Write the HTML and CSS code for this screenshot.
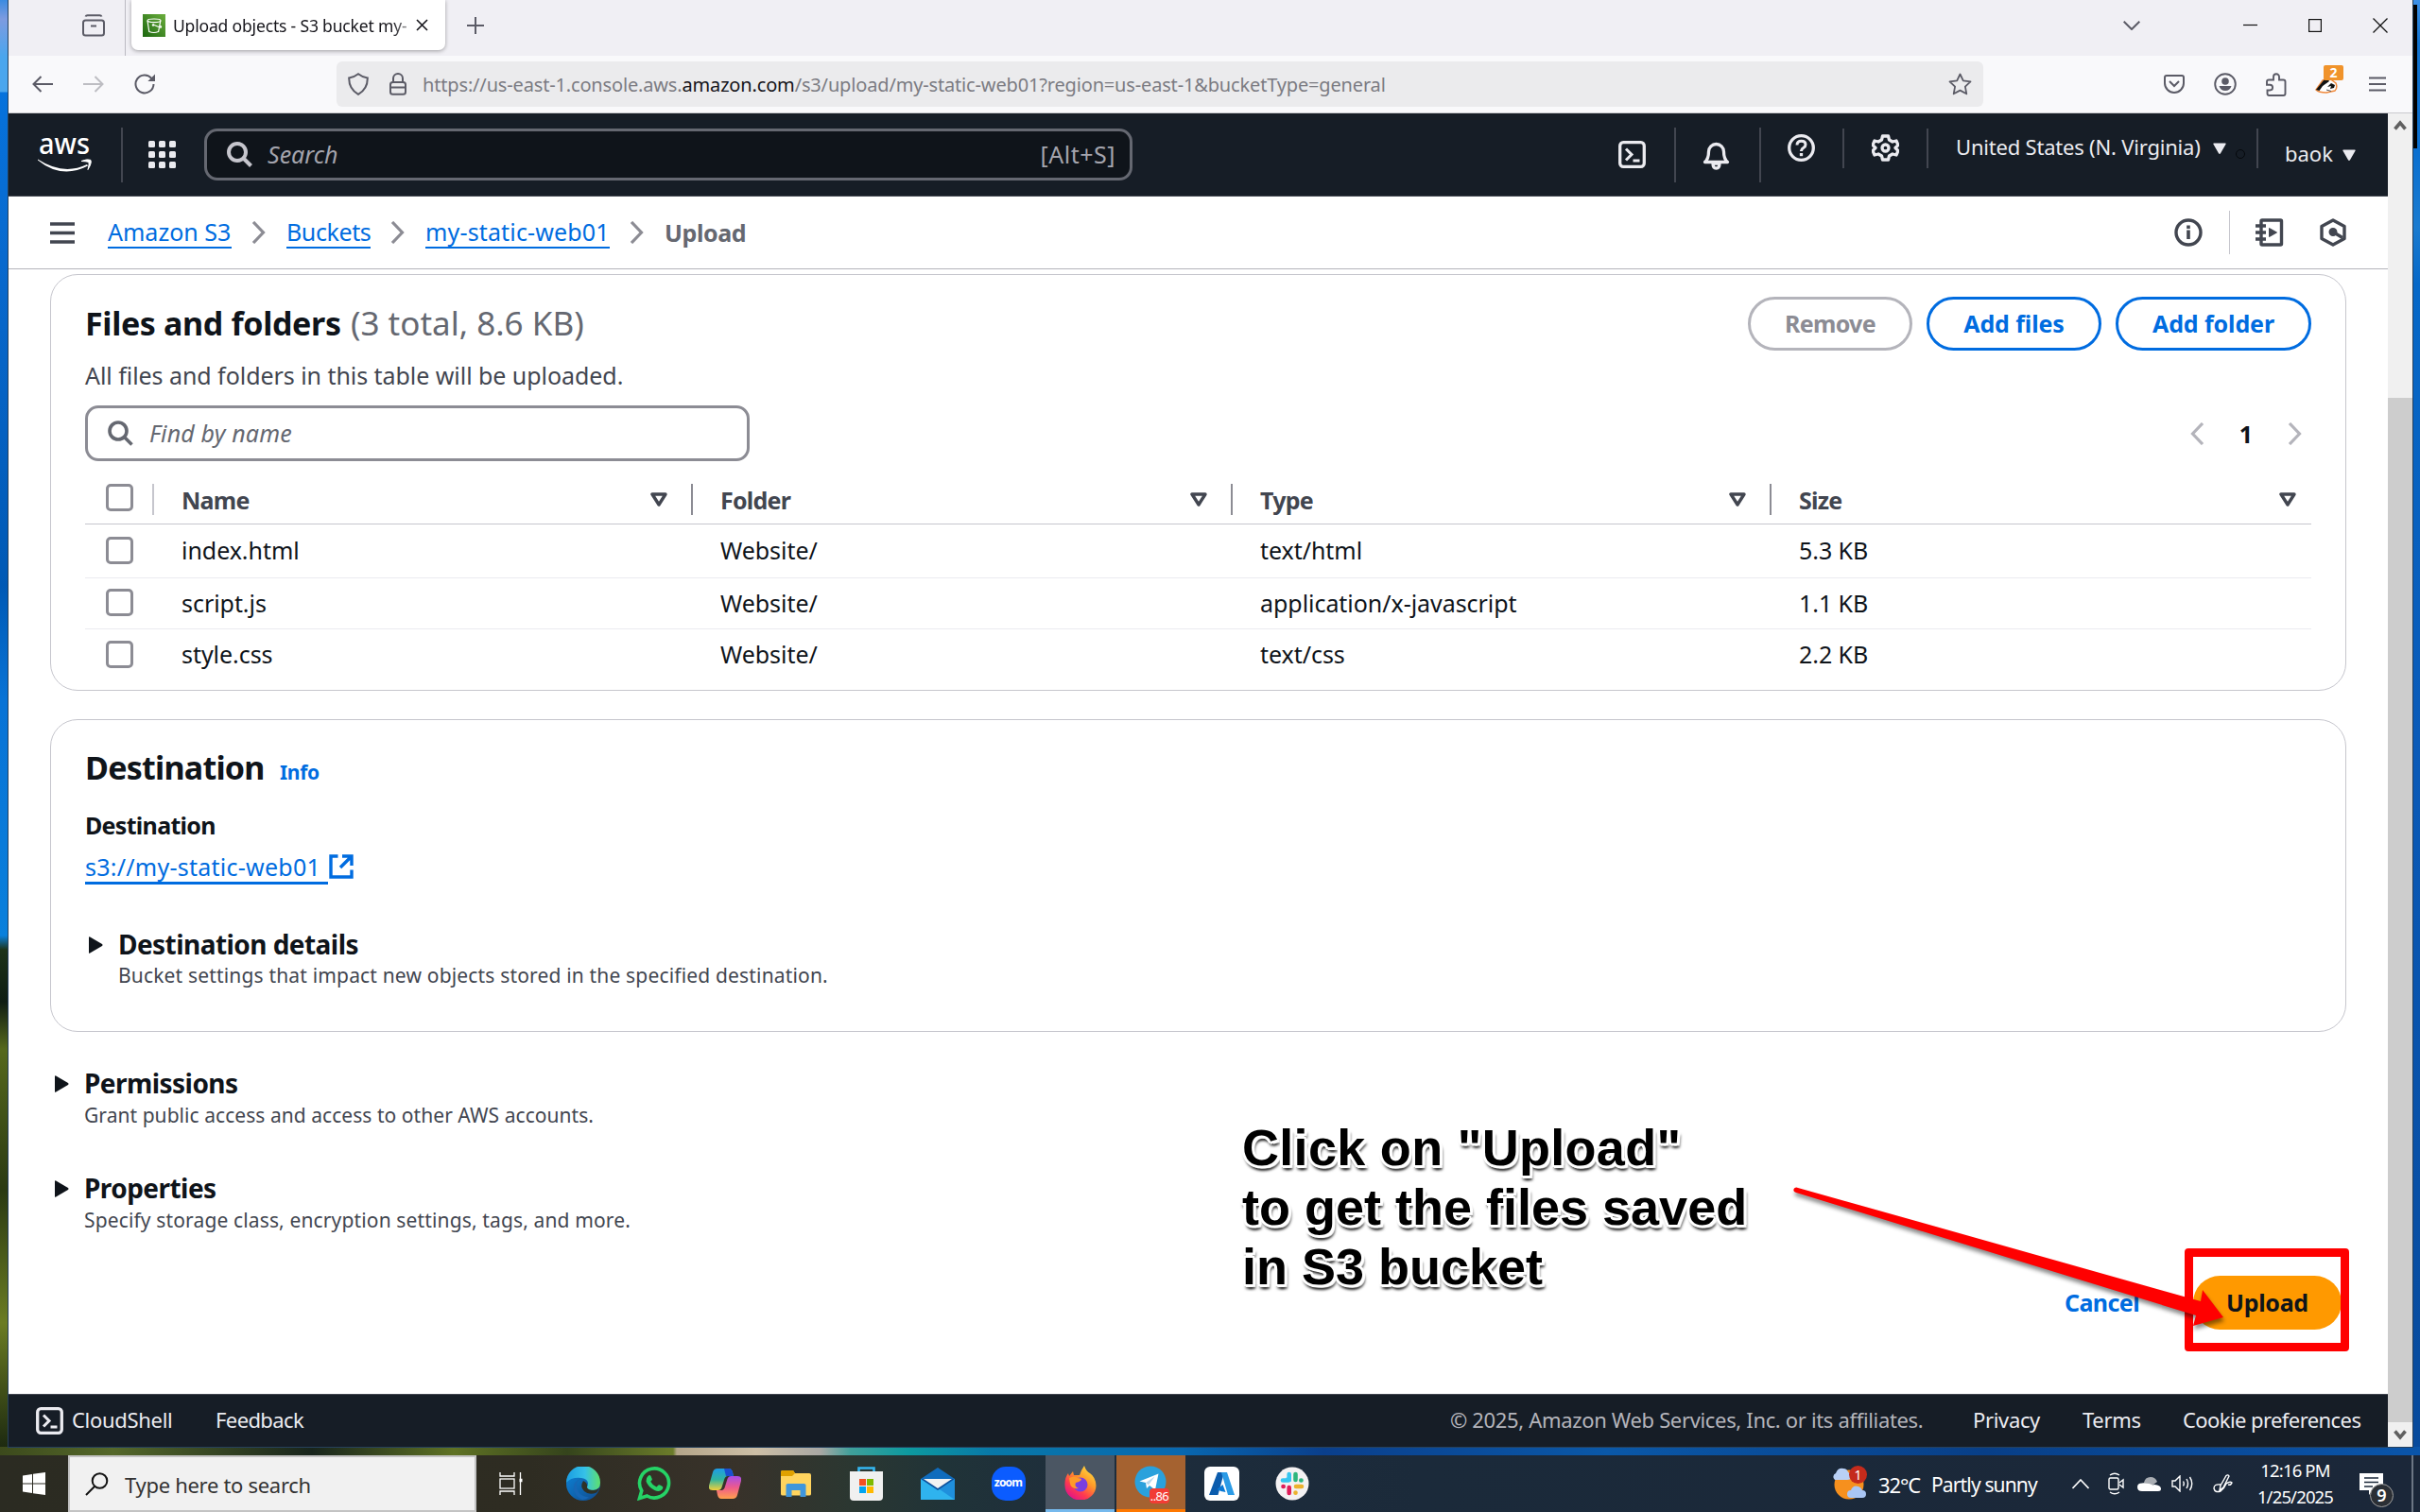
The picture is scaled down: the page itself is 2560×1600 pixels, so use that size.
FILE: index.html
```html
<!DOCTYPE html>
<html lang="en">
<head>
<meta charset="utf-8">
<title>Upload objects - S3 bucket my-static-web01</title>
<link rel="stylesheet" href="styles.css">
</head>
<body>
<div class="desktop">
<div class="window">
  <div class="tabstrip">
    <svg class="recent" width="24" height="24" viewBox="0 0 24 24" fill="none" stroke="#5b5b66" stroke-width="2"><path d="M3.5 2.5Q4 1.2 5.500 1.200H18.500Q20 1.200 20.500 2.500"/><rect x="1" y="6.500" width="22" height="16" rx="2.500"/><path d="M9 12.500h6"/></svg>
    <span class="tab-sep"></span>
    <div class="tab">
      <svg class="favicon" width="24" height="24" viewBox="0 0 24 24"><defs><linearGradient id="fg" x1="0" y1="1" x2="1" y2="0"><stop offset="0" stop-color="#1b660f"/><stop offset="1" stop-color="#6cae3e"/></linearGradient></defs><path fill="url(#fg)" d="M0 0h24v24H0z"/><g fill="none" stroke="#fff" stroke-width="1.200"><ellipse cx="12" cy="6.800" rx="7" ry="1.800"/><path d="M5 7l1.800 11.500q5 2 9.800 0L18.800 7M11 11l7 3q2 .5 1.500-1l-2-1"/></g><circle cx="11" cy="11.500" r="1.200" fill="#fff"/></svg>
      <span class="tab-title">Upload objects - S3 bucket my-</span>
      <svg class="tab-close" width="13" height="13" viewBox="0 0 13 13" stroke="#15141a" stroke-width="1.600"><path d="M1 1l11 11M12 1L1 12"/></svg>
    </div>
    <svg class="newtab" width="18" height="18" viewBox="0 0 18 18" stroke="#5b5b66" stroke-width="2"><path d="M9 0v18M0 9h18"/></svg>
    <svg class="tabs-all" width="18" height="10" viewBox="0 0 18 10" fill="none" stroke="#5b5b66" stroke-width="2"><path d="M.7.7L9 9 17.300.7"/></svg>
    <svg class="w-min" width="15" height="16" viewBox="0 0 15 16"><path d="M0 7.500h15" stroke="#111" stroke-width="1.200"/></svg>
    <svg class="w-max" width="14" height="14" viewBox="0 0 14 14"><rect x=".6" y=".6" width="12.800" height="12.800" fill="none" stroke="#111" stroke-width="1.200"/></svg>
    <svg class="w-close" width="16" height="16" viewBox="0 0 16 16"><path d="M.5.5l15 15M15.500.5l-15 15" stroke="#111" stroke-width="1.300"/></svg>
  </div>

  <div class="toolbar">
    <svg class="t-back" width="22" height="18" viewBox="0 0 22 18" fill="none" stroke="#5b5b66" stroke-width="2"><path d="M9.500 1L1.500 9l8 8M1.500 9H22"/></svg>
    <svg class="t-fwd" width="22" height="18" viewBox="0 0 22 18" fill="none" stroke="#bdbdc2" stroke-width="2"><path d="M12.500 1l8 8-8 8M20.500 9H0"/></svg>
    <svg class="t-reload" width="23" height="22" viewBox="0 0 23 22"><path d="M18.300 4.800A9.500 9.500 0 1 0 20.500 11" fill="none" stroke="#5b5b66" stroke-width="2"/><path d="M22 .6V8h-7.600z" fill="#5b5b66"/></svg>
    <div class="urlbar">
      <svg class="u-shield" width="22" height="24" viewBox="0 0 22 24" fill="none" stroke="#5b5b66" stroke-width="2"><path d="M11 1.200q5 3.800 9.800 4.300Q21 17 11 22.800 1 17 1.200 5.500 6 5 11 1.200z"/></svg>
      <svg class="u-lock" width="18" height="24" viewBox="0 0 18 24" fill="none" stroke="#5b5b66" stroke-width="2"><rect x="1" y="10" width="16" height="12.700" rx="2.500"/><path d="M4 10V6a5 5 0 0 1 10 0v4M1 15.500h16"/></svg>
      <span class="url">https://us-east-1.console.aws.<b>amazon.com</b>/s3/upload/my-static-web01?region=us-east-1&amp;bucketType=general</span>
      <svg class="u-star" width="25" height="24" viewBox="0 0 25 24" fill="none" stroke="#5b5b66" stroke-width="1.800" stroke-linejoin="round"><path d="M12.500 1.500l3.300 6.900 7.700 1-5.600 5.300 1.400 7.600-6.800-3.700-6.800 3.700 1.400-7.600L1.500 9.400l7.700-1z"/></svg>
    </div>
    <svg class="t-pocket" width="22" height="20" viewBox="0 0 22 20" fill="none" stroke="#5b5b66" stroke-width="2"><path d="M3 1h16q2 0 2 2v6a10 10 0 0 1-20 0V3q0-2 2-2z"/><path d="M6 7l5 5 5-5"/></svg>
    <svg class="t-acct" width="24" height="24" viewBox="0 0 24 24"><circle cx="12" cy="12" r="10.800" fill="none" stroke="#5b5b66" stroke-width="1.900"/><circle cx="12" cy="9" r="3.800" fill="#5b5b66"/><path d="M5.500 14h13q-1.500 5-6.500 5t-6.500-5z" fill="#5b5b66"/></svg>
    <svg class="t-ext" width="22" height="25" viewBox="0 0 22 25" fill="none" stroke="#5b5b66" stroke-width="1.900"><path d="M3 7.500h5V4.200a3 3 0 0 1 6 0v3.300h4.500q2 0 2 2V22q0 2-2 2H3.500q-2 0-2-2v-3.500h2.700a2.900 2.900 0 0 0 0-5.800H1V9.500q0-2 2-2z"/></svg>
    <div class="t-badger">
      <svg width="24" height="19" viewBox="0 0 24 19"><path d="M1 15L8 5q6-3 10 0l4 3q2 5-1 8l-9 2q-8 0-11-3z" fill="#fff" stroke="#f08a3c" stroke-width="1.500"/><path d="M1 15L9 5l4-2 2 3-7 5-3.500 5zM13 12l4-4 4 2-1 3-4 1 1-3z" fill="#111"/><path d="M12 15l5 1.500" stroke="#555"/></svg>
      <span class="badge">2</span>
    </div>
    <svg class="t-menu" width="18" height="16" viewBox="0 0 18 16" stroke="#5b5b66" stroke-width="2"><path d="M0 1.500h18M0 8h18M0 14.500h18"/></svg>
  </div>

  <div class="view">
    <div class="page">
      <header class="nav">
        <svg class="aws" width="58" height="64" viewBox="0 -14 58 64"><text x="1" y="17" class="aws-word" textLength="54" lengthAdjust="spacingAndGlyphs">aws</text><path d="M0 22.500q27 17.500 52 5.500l1 1.600Q25 44 0 23.500z" fill="#fff"/><path d="M46 24.500q6-2.500 9.800-1.200Q57.500 26 53 33.500q1.500-6 1-8-2-.8-8-1z" fill="#fff" stroke="#fff"/></svg>
        <i class="vsep tall a"></i>
        <svg class="apps" width="29" height="29" viewBox="0 0 29 29" fill="#ebebf0"><rect width="7" height="7" rx="1.500"/><rect x="11" width="7" height="7" rx="1.500"/><rect x="22" width="7" height="7" rx="1.500"/><rect y="11" width="7" height="7" rx="1.500"/><rect x="11" y="11" width="7" height="7" rx="1.500"/><rect x="22" y="11" width="7" height="7" rx="1.500"/><rect y="22" width="7" height="7" rx="1.500"/><rect x="11" y="22" width="7" height="7" rx="1.500"/><rect x="22" y="22" width="7" height="7" rx="1.500"/></svg>
        <div class="search"><svg width="27" height="27" viewBox="0 0 27 27" fill="none" stroke="#c6c6cd" stroke-width="4"><circle cx="11" cy="11" r="9"/><path d="M17.500 17.500l8 8"/></svg><em>Search</em><span>[Alt+S]</span></div>
        <svg class="n-shell" width="29" height="29" viewBox="0 0 29 29" fill="none" stroke="#ebebf0" stroke-width="3.300"><rect x="1.700" y="1.700" width="25.600" height="25.600" rx="3.500"/><path d="M8 8.500l6 6-6 6M15.500 21h7" stroke-width="3"/></svg>
        <i class="vsep tall b"></i>
        <svg class="n-bell" width="29" height="32" viewBox="0 0 29 32" fill="none" stroke="#ebebf0" stroke-width="3.300" stroke-linejoin="round"><path d="M2.500 23.500q4-3.500 4-11a8 8 0 0 1 16 0q0 7.500 4 11z"/><path d="M11 25q0 5 3.500 5t3.500-5z"/></svg>
        <i class="vsep tall c"></i>
        <div class="nav-high">
          <svg class="n-help" width="29" height="29" viewBox="0 0 29 29" fill="none" stroke="#ebebf0" stroke-width="3.300"><circle cx="14.500" cy="14.500" r="12.800"/><path d="M10 11.500q0-4.300 4.500-4.300T19 11q0 2-2 3.200t-2.500 3.300V18" stroke-width="3"/><path d="M14.500 20v3.200"/></svg>
          <i class="vsep d"></i>
          <svg class="n-gear" width="29" height="29" viewBox="0 0 29 29" fill="none" stroke="#ebebf0" stroke-width="3.300" stroke-linejoin="round"><path d="M11.500 2h6l1 4 3.500 2 4-1 2 4.500-3 3 3 3-2 4.500-4-1-3.500 2-1 4h-6l-1-4L7 21l-4 1-2-4.500 3-3-3-3L3 7l4 1 3.500-2z"/><circle cx="14.500" cy="14.500" r="3.500"/></svg>
          <i class="vsep e"></i>
          <span class="region">United States (N. Virginia)</span>
          <svg class="tri-r" width="14" height="12" viewBox="0 0 14 12"><path d="M1 .5h12q1 .3.600 1L8 11.300q-1 1.200-2 0L.4 1.500Q0 .8 1 .5z" fill="#ebebf0"/></svg>
          <i class="ring"></i>
          <i class="vsep f"></i>
        </div>
        <span class="user">baok</span>
        <svg class="tri-u" width="14" height="12" viewBox="0 0 14 12"><path d="M1 .5h12q1 .3.600 1L8 11.300q-1 1.200-2 0L.4 1.500Q0 .8 1 .5z" fill="#ebebf0"/></svg>
      </header>

      <nav class="crumbs">
        <svg class="burger" width="26" height="23" viewBox="0 0 26 23" stroke="#424650" stroke-width="3.600"><path d="M0 2h26M0 11.500h26M0 21h26"/></svg>
        <a class="c1">Amazon S3</a>
        <svg class="chev" width="15" height="24" viewBox="0 0 15 24"><path d="M2 1l10.500 11L2 23" fill="none" stroke="#8c8c94" stroke-width="3.200"/></svg>
        <a class="c2">Buckets</a>
        <svg class="chev" width="15" height="24" viewBox="0 0 15 24"><path d="M2 1l10.500 11L2 23" fill="none" stroke="#8c8c94" stroke-width="3.200"/></svg>
        <a class="c3">my-static-web01</a>
        <svg class="chev" width="15" height="24" viewBox="0 0 15 24"><path d="M2 1l10.500 11L2 23" fill="none" stroke="#8c8c94" stroke-width="3.200"/></svg>
        <b>Upload</b>
        <svg class="k-info" width="30" height="30" viewBox="0 0 30 30" fill="none" stroke="#424650" stroke-width="3.400"><circle cx="15" cy="15" r="13"/><path d="M15 12.500V22M15 7.500V11" stroke-width="3.600"/></svg>
        <i class="k-sep"></i>
        <svg class="k-tut" width="30" height="30" viewBox="0 0 30 30" fill="none" stroke="#424650" stroke-width="3.400"><rect x="6" y="2" width="21.500" height="26" rx="1"/><path d="M0 8h11M0 15h11M0 22h11"/><path d="M14.500 10.500v9l8-4.500z" fill="#424650" stroke-width="1"/></svg>
        <svg class="k-hex" width="28" height="30" viewBox="0 0 28 30" fill="none" stroke="#424650" stroke-width="3.400" stroke-linejoin="round"><path d="M14 2l12 6.500v13L14 28 2 21.500v-13z"/><circle cx="14" cy="14.500" r="2.800" fill="#424650"/><path d="M14 14.500l10 6"/></svg>
      </nav>

      <main>
        <section class="card files">
          <div class="card-head">
            <h2>Files and folders</h2><span class="count">(3 total, 8.6 KB)</span>
            <button class="btn off">Remove</button><button class="btn w2">Add files</button><button class="btn w3">Add folder</button>
          </div>
          <p class="lead">All files and folders in this table will be uploaded.</p>
          <div class="filter-row">
            <div class="filter"><svg width="27" height="27" viewBox="0 0 27 27" fill="none" stroke="#656871" stroke-width="3.600"><circle cx="11" cy="11" r="9"/><path d="M17.500 17.500l8 8"/></svg><em>Find by name</em></div>
            <div class="pager"><svg width="15" height="24" viewBox="0 0 15 24"><path d="M13 1L2.500 12 13 23" fill="none" stroke="#b4b4bb" stroke-width="3.200"/></svg><b>1</b><svg width="15" height="24" viewBox="0 0 15 24"><path d="M2 1l10.500 11L2 23" fill="none" stroke="#b4b4bb" stroke-width="3.200"/></svg></div>
          </div>
          <div class="row head">
            <i class="box"></i>
            <span class="th first">Name<svg width="18" height="15" viewBox="0 0 18 15"><path d="M2 2h14L9 13z" fill="none" stroke="#424650" stroke-width="3.400" stroke-linejoin="round"/></svg></span>
            <span class="th">Folder<svg width="18" height="15" viewBox="0 0 18 15"><path d="M2 2h14L9 13z" fill="none" stroke="#424650" stroke-width="3.400" stroke-linejoin="round"/></svg></span>
            <span class="th">Type<svg width="18" height="15" viewBox="0 0 18 15"><path d="M2 2h14L9 13z" fill="none" stroke="#424650" stroke-width="3.400" stroke-linejoin="round"/></svg></span>
            <span class="th last">Size<svg width="18" height="15" viewBox="0 0 18 15"><path d="M2 2h14L9 13z" fill="none" stroke="#424650" stroke-width="3.400" stroke-linejoin="round"/></svg></span>
          </div>
          <div class="row r1"><i class="box"></i><span>index.html</span><span>Website/</span><span>text/html</span><span>5.3 KB</span></div>
          <div class="row"><i class="box"></i><span>script.js</span><span>Website/</span><span>application/x-javascript</span><span>1.1 KB</span></div>
          <div class="row end"><i class="box"></i><span>style.css</span><span>Website/</span><span>text/css</span><span>2.2 KB</span></div>
        </section>

        <section class="card dest">
          <div class="dest-head"><h2>Destination</h2><a>Info</a></div>
          <h4>Destination</h4>
          <div class="dest-link"><a>s3://my-static-web01</a><svg width="26" height="26" viewBox="0 0 26 26" fill="none" stroke="#006ce0" stroke-width="3.400"><path d="M9.500 2H2v22h22v-7.500M14 2h10v10M24 2L12 14"/></svg></div>
          <div class="expander inner"><svg width="16" height="18" viewBox="0 0 16 18"><path d="M1 .8Q1-.3 2.200.4L15 8q1 1 0 2L2.200 17.600Q1 18.300 1 17.200z" fill="#0f141a"/></svg><div><h3>Destination details</h3><p>Bucket settings that impact new objects stored in the specified destination.</p></div></div>
        </section>

        <div class="expander perms"><svg width="16" height="18" viewBox="0 0 16 18"><path d="M1 .8Q1-.3 2.200.4L15 8q1 1 0 2L2.200 17.600Q1 18.300 1 17.200z" fill="#0f141a"/></svg><div><h3>Permissions</h3><p class="p2">Grant public access and access to other AWS accounts.</p></div></div>
        <div class="expander props"><svg width="16" height="18" viewBox="0 0 16 18"><path d="M1 .8Q1-.3 2.200.4L15 8q1 1 0 2L2.200 17.600Q1 18.300 1 17.200z" fill="#0f141a"/></svg><div><h3>Properties</h3><p class="p2 p3">Specify storage class, encryption settings, tags, and more.</p></div></div>
        <div class="actions"><a>Cancel</a><button class="primary">Upload</button></div>
      </main>

      <footer>
        <svg width="29" height="29" viewBox="0 0 29 29" fill="none" stroke="#ebebf0" stroke-width="3.300"><rect x="1.700" y="1.700" width="25.600" height="25.600" rx="3.500"/><path d="M8 8.500l6 6-6 6M15.500 21h7" stroke-width="3"/></svg>
        <span class="f-shell">CloudShell</span><span class="f-feed">Feedback</span>
        <span class="f-copy">© 2025, Amazon Web Services, Inc. or its affiliates.</span><span class="f-priv">Privacy</span><span class="f-terms">Terms</span><span class="f-cook">Cookie preferences</span>
      </footer>
    </div>
    <div class="scroll">
      <svg width="26" height="26" viewBox="0 0 26 26"><path d="M7.500 16.500L13 10l5.500 6.500" fill="none" stroke="#606060" stroke-width="3.600"/></svg>
      <i class="thumb"></i>
      <svg width="26" height="26" viewBox="0 0 26 26"><path d="M7.500 9.500L13 16l5.500-6.500" fill="none" stroke="#606060" stroke-width="3.600"/></svg>
    </div>
  </div>
</div>
</div>

<div class="taskbar">
  <svg class="start" width="24" height="24" viewBox="0 0 24 24" fill="#fff"><path d="M0 3.400L10 2v9.500H0zM11 1.800L24 0v11.500H11zM0 12.500h10V22L0 20.600zM11 12.500h13V24l-13-1.800z"/></svg>
  <div class="tsearch"><svg width="25" height="25" viewBox="0 0 25 25" fill="none" stroke="#111" stroke-width="2"><circle cx="15.500" cy="9" r="7.800"/><path d="M10 15L1 24"/></svg><span>Type here to search</span></div>
  <svg class="tview" width="25" height="24" viewBox="0 0 25 24" fill="none" stroke="#fff" stroke-width="1.300"><path d="M1 0v4h15V0M1 24v-4h15v4"/><rect x="1" y="7" width="15" height="10"/><path d="M22.500 0v24"/><path d="M21.500 8.500h3" stroke-width="3.500"/></svg>
  <svg class="edge" width="36" height="36" viewBox="0 0 36 36"><defs><linearGradient id="e1" x1="0" x2="1"><stop offset="0" stop-color="#1b9de2"/><stop offset=".55" stop-color="#35c1e8"/><stop offset="1" stop-color="#5fe06a"/></linearGradient><linearGradient id="e2" x1="0" y1="0" x2="1" y2="1"><stop offset="0" stop-color="#0c86dc"/><stop offset="1" stop-color="#114a8b"/></linearGradient></defs><circle cx="18" cy="18" r="18" fill="url(#e2)"/><path d="M0 17A18 18 0 0 1 36 17q0 8-9 8-6 0-6-3 2-1 2-4 0-5-7-6Q5 11 0 17z" fill="url(#e1)"/><path d="M22 22q1 3 7 3 3 0 6-2.500-1 3-3 5-8 3-13-1.500-5-5-1-11 5 2 4 7z" fill="#2f3126"/><path d="M11 19q0 12 13 13.500-3 2-7 2.500-9-4-9-13 0-7 8-9-5 2-5 6z" fill="#1767b5"/></svg>
  <svg class="wa" width="36" height="36" viewBox="0 0 36 36"><path d="M2.500 33.500l2.300-8A15.500 15.500 0 1 1 10.500 31z" fill="none" stroke="#25d366" stroke-width="3.600"/><path d="M11.500 10q2-2 3 0l1.400 3.300q0 1-1.700 2.500 2 4 6.300 5.700l2-2q1-.8 4.700 1.700.5 1-.7 3-3 3-8 .7-7-3.400-9-9.400-.3-3.500 2-5.500z" fill="#25d366"/></svg>
  <svg class="cop" width="34" height="32" viewBox="0 0 34 32"><defs><linearGradient id="c1" x1="0" y1="0" x2="0" y2="1"><stop offset="0" stop-color="#1e9be8"/><stop offset=".5" stop-color="#2fb4a0"/><stop offset="1" stop-color="#f4d03a"/></linearGradient><linearGradient id="c2" x1="0" y1="0" x2="0" y2="1"><stop offset="0" stop-color="#a64de8"/><stop offset=".5" stop-color="#ee5a8c"/><stop offset="1" stop-color="#ffa04d"/></linearGradient></defs><path d="M9 0h12q3 0 4 4l1 4h-6q-3 0-4 4l-2.500 8q-1 3-4 3H4q-5 0-4-5L4 4q1-4 5-4z" fill="url(#c1)"/><path d="M16 0h5q3 0 4 4l1 4h-8z" fill="#1a4fd0"/><path d="M25 32H13q-3 0-4-4l-1-5h5q3 0 4-4l2.500-8q1-3 4-3H30q5 0 4 5l-4 15q-1 4-5 4z" fill="url(#c2)"/></svg>
  <svg class="fold" width="32" height="28" viewBox="0 0 32 28"><path d="M0 2q0-2 2-2h11l2 3h15q2 0 2 2v20q0 1.500-2 1.500H2Q0 26.500 0 25z" fill="#ffd45e"/><path d="M0 6V2q0-2 2-2h11l2 3-3 3z" fill="#e0a100"/><path d="M5.500 28V15.500q0-1.500 2-1.500h17q2 0 2 1.500V28h-6v-7h-9v7z" fill="#3f96dc"/></svg>
  <svg class="store" width="35" height="36" viewBox="0 0 35 36"><path d="M9.500 7V1.500h16V7" fill="none" stroke="#34b7f1" stroke-width="2.600"/><path d="M0 5h35v27q0 4-4 4H4q-4 0-4-4z" fill="#f0f0f0"/><path d="M10 13h7v7h-7z" fill="#f25022"/><path d="M18 13h7v7h-7z" fill="#7fba00"/><path d="M10 21h7v7h-7z" fill="#00a4ef"/><path d="M18 21h7v7h-7z" fill="#ffb900"/></svg>
  <svg class="mail" width="36" height="34" viewBox="0 0 36 34"><path d="M0 12L18 0l18 12z" fill="#0f6cbd"/><path d="M0 12h36v22H0z" fill="#2fb3ee"/><path d="M36 12v22L17 21z" fill="#1f8fdc"/><path d="M0 12h36L18 24z" fill="#0b4f9c"/><path d="M3 12h30L18 22z" fill="#f3f3f3"/></svg>
  <div class="zoom"><span>zoom</span></div>
  <div class="tile ff"><svg width="34" height="36" viewBox="0 0 34 36"><defs><linearGradient id="f1" x1="1" y1="0" x2=".3" y2="1"><stop offset="0" stop-color="#fff04a"/><stop offset=".45" stop-color="#ff9a28"/><stop offset=".75" stop-color="#ff3b4e"/><stop offset="1" stop-color="#e21587"/></linearGradient></defs><path d="M21 0q2 6 6 8 6 4 6.500 13A16.500 15.500 0 0 1 .5 21Q0 13 4 8l1 3 4-5 1 4h6q2-6 5-10z" fill="url(#f1)"/><circle cx="17" cy="20" r="7.500" fill="#7a3fe0"/><path d="M5 13q6-3 9 0 4 0 4 2-3 3-6 3-2 4 3 6-8 1-9-5z" fill="#ff9a28"/></svg></div>
  <div class="tile tg"><svg width="38" height="38" viewBox="0 0 38 38"><circle cx="18" cy="18" r="16.500" fill="#2aa1dc"/><path d="M6.500 17.500L26.500 9.500 23 26.500l-6-4.500-3 3-1-6z" fill="#fff"/><path d="M13 19l9.500-6.500-6.500 9z" fill="#b8d8ec"/></svg><span>..86</span></div>
  <svg class="az" width="37" height="36" viewBox="0 0 37 36"><rect width="37" height="36" rx="6" fill="#fff"/><path d="M14 6h7L14.500 30H5z" fill="#0b5cad"/><path d="M18 6h6l8 24h-7z" fill="#2b9be6"/><path d="M13.500 24l6-5 3 8-5-1z" fill="#0a78d4"/></svg>
  <svg class="slack" width="36" height="36" viewBox="0 0 36 36"><circle cx="18" cy="18" r="17.500" fill="#f4f2f3"/><g stroke-width="4.600" stroke-linecap="round"><path d="M14.700 8v5.500h-1.500M8 14.500h6" stroke="#36c5f0" fill="none"/><path d="M21.500 8v6M27.500 14.500h-.2" stroke="#2eb67d"/><path d="M28 21h-6M21.500 27.500v.2" stroke="#ecb22e"/><path d="M14.700 28v-6M8.500 21h.2" stroke="#e01e5a"/></g></svg>

  <div class="weather"><svg width="37" height="34" viewBox="0 0 37 34"><circle cx="18" cy="18" r="15.500" fill="#f6901e"/><path d="M3 13a4 4 0 0 1 1-7q2-6 8-5 4 0 5 4 4 1 3 5 0 3-4 3z" fill="#b9d0f5"/><path d="M20 32a4 4 0 0 1 0-8q2-6 8-4 3 1 4 4 4 0 4 4 0 4-4 4z" fill="#a9c6f5"/></svg><span>1</span></div>
  <span class="temp">32°C</span><span class="sky">Partly sunny</span>
  <svg class="s-up" width="18" height="11" viewBox="0 0 18 11" fill="none" stroke="#fff" stroke-width="1.600"><path d="M.5 10L9 1l8.500 9"/></svg>
  <svg class="s-cam" width="17" height="24" viewBox="0 0 17 24" fill="none" stroke="#fff" stroke-width="1.400"><rect x="1" y="6" width="10" height="12" rx="1.500"/><path d="M12 11l4-3v8l-4-3M2 3q5-3.500 10 0M2 21q5 3.500 10 0"/></svg>
  <svg class="s-cloud" width="25" height="16" viewBox="0 0 25 16"><path d="M3 12q0-4 4-5 1-6 7-6 5 0 7 5l-8 6z" fill="#a9adb3"/><path d="M5 16q-5 0-5-4.500T6 7.500q8 0 10 2 2-1 5 0 4 1 4 4 0 2.500-3 2.500z" fill="#fff"/></svg>
  <svg class="s-vol" width="24" height="18" viewBox="0 0 24 18" fill="none" stroke="#fff" stroke-width="1.400"><path d="M1 6h3l5-5v16l-5-5H1zM12.500 6.500q1.500 2.500 0 5M16 4q3 5 0 10M19.500 2q4.500 7 0 14"/></svg>
  <svg class="s-pen" width="21" height="20" viewBox="0 0 21 20" fill="none" stroke="#fff" stroke-width="1.400"><path d="M8 12L14 1.500q2-1.500 3 .5L11 14l-4 3zM8 11q-7-1-7 4 1 5 7 3 4-3 6-8 4-3 6-1-1 3-4 2"/></svg>
  <div class="clock"><span>12:16 PM</span><span>1/25/2025</span></div>
  <div class="note"><svg width="25" height="23" viewBox="0 0 25 23"><path d="M0 0h25v18h-11l-4 5v-5H0z" fill="#fff"/><path d="M5 5h15M5 9.500h15M5 14h9" stroke="#1c2a3b" stroke-width="1.500"/></svg><span>9</span></div>
  <i class="peek"></i>
</div>

<div class="callout"><span>Click on "Upload"</span><br>to get the files saved<br>in S3 bucket</div>
<div class="frame"></div>
<svg class="arrow" width="480" height="170" viewBox="0 0 480 170"><path d="M10 16.500Q8 20 12 21L435 151l-3 11 32-9-22-29-2 12L14 16q-2-1-4 .5z" fill="#f00"/></svg>
</body>
</html>
```
FILE: styles.css
```css
* { box-sizing: border-box; }
body { margin: 0; width: 2560px; height: 1600px; overflow: hidden; display: grid; grid-template-rows: 1540px 60px; font-family: "Noto Sans", "Open Sans", sans-serif; font-size: 25px; color: #0f141a; white-space: nowrap; position: relative; }
svg { display: block; flex: none; }
h2, h3, h4, p { margin: 0; }
button { font: inherit; padding: 0 0 2px; flex: none; }

.desktop {
  padding: 0 8px 9px 9px;
  background:
    linear-gradient(#000, #000) 2552px 5px / 5px 152px no-repeat,
    linear-gradient(#3d90e6, #1273d0 45px, #0a6fd0 160px, #1a7bd0 240px, #0668c8 300px, #0a5ab8 800px, #074a9c 1531px) 100% 0 / 8px 1531px no-repeat,
    linear-gradient(#3b8be0, #7d9be0 20px, #4aa6ee 60px, #4aa6ee 97px, #0672dc 98px, #0868cc 300px, #0059b5 620px, #0873d6 740px, #0a80dc 990px, #1d3318 1005px, #0f1d12 1060px, #55681c 1110px, #2a3a12 1260px, #6b7c22 1400px, #1d2a10 1531px) 0 0 / 9px 1531px no-repeat,
    linear-gradient(90deg, #3c4a1c, #55682a 120px, #18251c 330px, #5f7224 480px, #35441c 600px, #6b7c2a 712px, #b5a68a 716px, #cdbfa6 800px, #a9a8a4 868px, #3fa09a 900px, #0d9a9f 960px, #0878a8 1050px, #0868b0 1250px, #0a3f8c 1400px, #0a58a8 1700px, #083f88 2100px, #0a55aa 2560px) 0 100% / 100% 9px no-repeat;
}
.window { height: 1531px; display: flex; flex-direction: column; background: #fff; box-shadow: 0 0 0 1px #26405c; }

.tabstrip { height: 59px; background: #f0eff4; display: flex; align-items: center; padding-bottom: 6px; flex: none; }
.recent { margin-left: 78px; }
.tab-sep { width: 1px; height: 59px; margin: 6px 6px 0 21px; background: #bbbac2; }
.tab { width: 332px; height: 53px; background: #fff; border-radius: 0 0 7px 7px; box-shadow: 0 1px 4px rgba(0,0,0,.35); display: flex; align-items: center; padding-left: 12px; }
.tab-title { margin-left: 8px; width: 256px; font-size: 17.500px; letter-spacing: -.17px; background: linear-gradient(90deg, #15141a 232px, #bbb 253px); -webkit-background-clip: text; background-clip: text; color: transparent; }
.tab-close { margin-left: 1px; }
.newtab { margin-left: 23px; }
.tabs-all { margin-left: 1734px; }
.w-min { margin-left: 109px; }
.w-max { margin-left: 54px; }
.w-close { margin-left: 54px; }

.toolbar { height: 61px; background: #f9f9fb; border-bottom: 1px solid #c9c9ce; display: flex; align-items: center; flex: none; }
.t-back { margin-left: 25px; }
.t-fwd { margin-left: 32px; }
.t-reload { margin-left: 32px; }
.urlbar { margin-left: 191px; width: 1742px; height: 48px; border-radius: 6px; background: #ebebed; display: flex; align-items: center; padding-left: 12px; flex: none; }
.u-lock { margin-left: 22px; }
.url { margin-left: 17px; width: 1040px; font-size: 20px; letter-spacing: -.16px; color: #7b7b82; padding-top: 1px; }
.url b { font-weight: 400; color: #15141a; }
.u-star { margin-left: 574px; }
.t-pocket { margin-left: 191px; }
.t-acct { margin-left: 31px; }
.t-ext { margin-left: 31px; }
.t-badger { margin-left: 30px; position: relative; padding-top: 1px; }
.badge { position: absolute; left: 9px; top: -10px; width: 21px; height: 16px; border-radius: 2px; background: #f0932b; color: #fff; font-size: 14px; font-weight: 700; line-height: 16px; text-align: center; }
.t-menu { margin-left: 33px; }

.view { flex: 1; display: flex; min-height: 0; }
.page { width: 2517px; display: flex; flex-direction: column; }
.scroll { width: 26px; background: #f0f0f0; display: flex; flex-direction: column; }
.thumb { margin: 275px 0 0; height: 1084px; background: #cdcdcd; }

.nav { height: 88px; background: #161d26; border-bottom: 1px solid #424650; display: flex; align-items: center; color: #ebebf0; flex: none; }
.aws { margin-left: 31px; }
.aws-word { font-size: 31px; font-weight: 500; fill: #fff; }
.vsep { width: 2px; height: 42px; background: #424650; flex: none; }
.vsep.tall { height: 58px; }
.vsep.a { margin-left: 30px; }
.apps { margin-left: 27px; }
.search { margin-left: 30px; width: 982px; height: 55px; border: 3px solid #656871; border-radius: 14px; background: #0f141a; display: flex; align-items: center; padding: 0 15px 0 21px; color: #a4a4ad; flex: none; }
.search em { margin-left: 16px; flex: 1; padding-bottom: 1px; }
.search span { letter-spacing: .5px; padding-bottom: 2px; }
.n-shell { margin-left: 514px; }
.vsep.b { margin-left: 30px; }
.n-bell { margin-left: 28px; }
.vsep.c { margin-left: 31px; }
.nav-high { align-self: flex-start; height: 73px; display: flex; align-items: center; font-size: 22px; }
.n-help { margin-left: 28px; }
.vsep.d { margin-left: 29px; }
.n-gear { margin-left: 29px; }
.vsep.e { margin-left: 29px; }
.region { margin-left: 29px; width: 272px; letter-spacing: -.2px; padding-bottom: 3px; }
.ring { margin: 12px 0 0 10px; width: 10px; height: 10px; border: 1px solid #05080c; border-radius: 50%; }
.vsep.f { margin-left: 12px; }
.user { margin-left: 28px; width: 61px; font-size: 22px; padding-bottom: 3px; }

.crumbs { height: 77px; border-bottom: 1px solid #b4b4bb; display: flex; align-items: center; flex: none; }
.burger { margin-left: 44px; margin-right: 35px; }
.crumbs a { color: #006ce0; border-bottom: 2px solid #006ce0; line-height: 32px; height: 34px; }
.c1 { width: 131px; }
.c2 { width: 89px; letter-spacing: -.4px; }
.c3 { width: 195px; letter-spacing: .15px; }
.chev { margin: 0 22px 0 21px; }
.crumbs b { width: 89px; color: #656871; letter-spacing: -.4px; padding-bottom: 1px; }
.k-info { margin-left: 1508px; }
.k-sep { margin: 0 27px 0 28px; width: 1px; height: 46px; background: #c6c6cd; }
.k-hex { margin-left: 38px; }

main { flex: 1; padding: 5px 44px 0 44px; display: flex; flex-direction: column; min-height: 0; }
.card { border: 1px solid #c6c6cd; border-radius: 29px; padding: 0 36px; flex: none; }
.files { height: 441px; padding-top: 23px; }
.dest { height: 331px; margin-top: 30px; padding-top: 28px; }
.card-head { height: 57px; display: flex; align-items: center; }
h2 { font-size: 34px; letter-spacing: -.35px; line-height: 46px; width: 281px; padding-bottom: 2px; }
.count { font-size: 35px; color: #656871; flex: 1; padding-bottom: 2px; }
.btn { height: 57px; border: 3px solid #006ce0; border-radius: 29px; background: #fff; color: #006ce0; font-weight: 700; letter-spacing: -.1px; margin-left: 15px; }
.btn.off { width: 174px; border-color: #b4b4bb; color: #8c8c94; letter-spacing: -.7px; }
.w2 { width: 185px; }
.w3 { width: 207px; }
.lead { margin-top: 10px; line-height: 32px; color: #424650; letter-spacing: -.05px; }
.filter-row { margin-top: 16px; height: 59px; display: flex; justify-content: space-between; align-items: center; }
.filter { width: 703px; height: 59px; border: 3px solid #8c8c94; border-radius: 14px; display: flex; align-items: center; padding-left: 21px; color: #656871; }
.filter em { margin-left: 17px; letter-spacing: .15px; padding-bottom: 2px; }
.pager { display: flex; align-items: center; padding-right: 10px; }
.pager b { width: 88px; text-align: center; }
.row { display: grid; grid-template-columns: 71px 570px 571px 570px 1fr; align-items: center; height: 54px; border-bottom: 1px solid #ebebf0; letter-spacing: -.05px; }
.row > span { padding: 0 0 2px 31px; }
.row.r1 { height: 57px; }
.row.end { border: 0; }
.box { width: 29px; height: 29px; border: 3px solid #8c8c94; border-radius: 5px; margin: -2px 0 0 22px; }
.row.head { margin-top: 15px; height: 52px; border-color: #c6c6cd; color: #424650; font-weight: 700; letter-spacing: -.75px; }
.head .box { margin-top: -4px; }
.row > .th { height: 33px; border-left: 2px solid #8c8c94; padding: 0 25px 0 29px; display: flex; align-items: center; justify-content: space-between; }
.row > .th.first { border-color: #c6c6cd; }
.row > .th.last { padding-right: 16px; }

.dest-head { display: flex; align-items: baseline; height: 46px; }
.dest h2 { width: 206px; letter-spacing: -.75px; padding: 0; margin-top: -1px; }
.dest-head a { color: #006ce0; font-size: 21px; font-weight: 700; letter-spacing: -.3px; }
h4 { font-size: 25px; line-height: 32px; margin-top: 21px; letter-spacing: -.7px; }
.dest-link { margin-top: 12px; display: flex; align-items: center; }
.dest-link a { width: 257px; line-height: 32px; border-bottom: 3px solid #006ce0; color: #006ce0; letter-spacing: .25px; }
.dest-link svg { margin: -4px 0 0 1px; }
.expander { display: flex; flex: none; }
.expander svg { margin-top: 9px; }
.expander > div { margin-left: 16px; }
.expander h3 { font-size: 28px; line-height: 36px; letter-spacing: -.55px; margin: -1px 0 1px; }
.expander p { font-size: 21px; line-height: 28px; color: #424650; letter-spacing: .17px; }
.expander .p2 { letter-spacing: .05px; padding-top: 1px; }
.expander .p3 { letter-spacing: .14px; }
.inner { margin-top: 46px; padding-left: 3px; }
.perms { margin-top: 37px; padding-left: 4px; }
.props { margin-top: 46px; padding-left: 4px; }
.actions { margin-top: 45px; height: 57px; display: flex; justify-content: flex-end; align-items: center; padding-right: 5px; }
.actions a { color: #006ce0; font-weight: 700; letter-spacing: -.6px; margin-right: 57px; padding-bottom: 1px; }
.primary { width: 157px; height: 57px; border: 0; border-radius: 29px; background: #f90; color: #0f141a; font-weight: 700; letter-spacing: -.3px; }

footer { height: 56px; background: #161d26; border-top: 1px solid #424650; display: flex; align-items: center; padding-left: 29px; font-size: 22px; color: #ebebf0; letter-spacing: -.34px; flex: none; }
footer span { padding-bottom: 3px; }
.f-shell { margin-left: 9px; width: 152px; letter-spacing: -.3px; }
.f-feed { width: 95px; letter-spacing: -.6px; }
.f-copy { margin-left: 1211px; width: 553px; color: #b4b4bb; }
.f-priv { width: 116px; }
.f-terms { width: 106px; }
.f-cook { letter-spacing: -.58px; }

.taskbar { display: flex; align-items: center; color: #fff; background: linear-gradient(90deg, #2b2b22, #2e2c22 560px, #38322a 780px, #2b3731 900px, #203338 1000px, #1e2d3c 1150px, #1b2a3a 1500px, #1b2739); }
.start { margin-left: 24px; }
.tsearch { margin-left: 24px; width: 432px; height: 60px; background: #f1f1f1; border: 2px solid #c3c3c3; display: flex; align-items: center; padding-left: 16px; color: #333; font-size: 22px; letter-spacing: -.3px; flex: none; }
.tsearch span { margin-left: 17px; padding-top: 1px; }
.tview { margin-left: 24px; }
.edge { margin-left: 46px; }
.wa { margin-left: 39px; }
.cop { margin-left: 40px; }
.fold { margin-left: 42px; }
.store { margin-left: 41px; }
.mail { margin-left: 40px; }
.zoom { margin-left: 39px; width: 36px; height: 36px; border-radius: 15px; background: #0b5cff; font-size: 12px; font-weight: 700; line-height: 34px; text-align: center; flex: none; letter-spacing: -.8px; }
.zoom span { margin-left: -1px; }
.tile { height: 60px; display: flex; align-items: center; justify-content: center; width: 73px; flex: none; }
.ff { margin-left: 21px; background: #4b5663; border-bottom: 3px solid #76b9ed; }
.tg { margin-left: 2px; background: #a56230; border-bottom: 3px solid #ff7800; position: relative; }
.tg span { position: absolute; left: 35px; top: 35px; width: 21px; height: 16px; border-radius: 4px; background: #f23c34; font-size: 13px; line-height: 16px; text-align: center; letter-spacing: -.6px; }
.az { margin-left: 20px; }
.slack { margin-left: 38px; }
.weather { margin-left: 553px; position: relative; flex: none; }
.weather span { position: absolute; left: 18px; top: -2px; width: 19px; height: 19px; border-radius: 50%; background: #c42b1c; font-size: 14px; line-height: 19px; text-align: center; }
.temp { margin-left: 12px; width: 56px; font-size: 22px; letter-spacing: -1.100px; padding-top: 2px; }
.sky { width: 111px; font-size: 21px; letter-spacing: -.85px; padding-top: 2px; }
.s-up { margin-left: 38px; }
.s-cam { margin-left: 20px; }
.s-cloud { margin-left: 14px; }
.s-vol { margin-left: 11px; }
.s-pen { margin-left: 20px; }
.clock { margin-left: 19px; width: 94px; display: flex; flex-direction: column; align-items: center; font-size: 18.500px; line-height: 28px; letter-spacing: -.85px; flex: none; padding-bottom: 1px; }
.note { margin: 0 0 0 21px; position: relative; flex: none; }
.note span { position: absolute; left: 11px; top: 11px; width: 25px; height: 25px; border-radius: 50%; background: #2b2f35; border: 1px solid #a0a0a0; font-size: 18px; font-weight: 600; line-height: 22px; text-align: center; }
.peek { margin-left: 30px; width: 2px; height: 60px; background: #6c7684; }

.callout { position: absolute; left: 1314px; top: 1183px; font: 700 54px/63px "Liberation Sans", Arial, sans-serif; color: #000;
  text-shadow: 3px 0 #fff, -3px 0 #fff, 0 3px #fff, 0 -3px #fff, 2px 2px #fff, -2px 2px #fff, 2px -2px #fff, -2px -2px #fff, 3px 3px 1px #fff, 3px 5px 3px rgba(0,0,0,.75), 0 5px 3px rgba(0,0,0,.6); }
.callout span { letter-spacing: .3px; }
.frame { position: absolute; left: 2311px; top: 1321px; width: 174px; height: 109px; border: 9px solid #f00; border-radius: 4px; }
.arrow { position: absolute; left: 1888px; top: 1241px; filter: drop-shadow(1px 4px 2px rgba(0,0,0,.45)); }
```
